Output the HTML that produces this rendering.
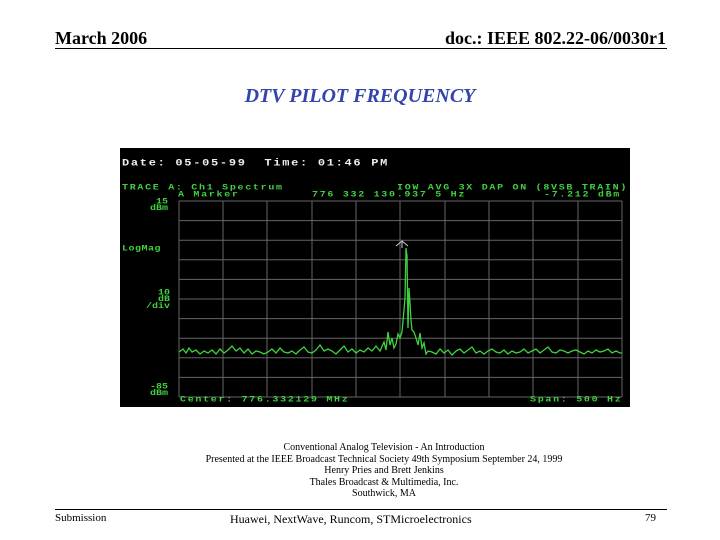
<html><head><style>
body{margin:0;width:720px;height:540px;background:#fff;position:relative;font-family:"Liberation Serif",serif;overflow:hidden}
.a{position:absolute;white-space:nowrap}
.m{font-family:"Liberation Mono",monospace;font-size:10px;line-height:8px;font-weight:bold;position:absolute;white-space:nowrap;letter-spacing:1.7px;transform:scaleY(0.85);transform-origin:0 0}
</style></head><body>
<div class="a" style="left:55px;top:28px;font-size:18px;font-weight:bold">March 2006</div>
<div class="a" style="right:54px;top:28px;font-size:18px;font-weight:bold">doc.: IEEE 802.22-06/0030r1</div>
<div class="a" style="left:55px;top:48px;width:612px;border-top:1px solid #000"></div>
<div class="a" style="left:0;width:720px;text-align:center;top:85px;font-size:20px;font-style:italic;font-weight:bold;color:#3344aa">DTV PILOT FREQUENCY</div>
<div class="a" style="left:120px;top:148px;width:510px;height:259px;background:#000">
<svg width="510" height="259" style="position:absolute;left:0;top:0">
<g stroke="#666" stroke-width="1">
<line x1="59" y1="53" x2="502" y2="53"/><line x1="59" y1="72.6" x2="502" y2="72.6"/><line x1="59" y1="92.2" x2="502" y2="92.2"/><line x1="59" y1="111.8" x2="502" y2="111.8"/><line x1="59" y1="131.4" x2="502" y2="131.4"/><line x1="59" y1="151" x2="502" y2="151"/><line x1="59" y1="170.6" x2="502" y2="170.6"/><line x1="59" y1="190.2" x2="502" y2="190.2"/><line x1="59" y1="209.8" x2="502" y2="209.8"/><line x1="59" y1="229.4" x2="502" y2="229.4"/><line x1="59" y1="249" x2="502" y2="249"/>
<line x1="59" y1="53" x2="59" y2="249"/><line x1="103" y1="53" x2="103" y2="249"/><line x1="147" y1="53" x2="147" y2="249"/><line x1="192" y1="53" x2="192" y2="249"/><line x1="236" y1="53" x2="236" y2="249"/><line x1="280" y1="53" x2="280" y2="249"/><line x1="325" y1="53" x2="325" y2="249"/><line x1="369" y1="53" x2="369" y2="249"/><line x1="413" y1="53" x2="413" y2="249"/><line x1="458" y1="53" x2="458" y2="249"/><line x1="502" y1="53" x2="502" y2="249"/>
</g>
<polyline fill="none" stroke="#3fd23f" stroke-width="1.3" points="59,204 63,201 66,205 69,200 72,204 76,202 80,206 84,203 88,205 92,202 96,206 100,201 104,205 108,202 112,198 116,203 120,200 124,205 128,201 132,206 136,203 140,204 144,206 148,204 152,201 156,205 160,200 164,204 168,205 172,203 176,206 180,202 184,199 188,204 192,205 196,202 200,197 204,203 208,201 212,203 216,206 220,202 224,198 228,204 232,201 236,205 240,202 244,204 248,200 252,203 256,198 260,203 264,194 266,202 268,184 270,197 272,190 274,200 276,196 278,186 280,190 282,184 284,162 285,150 286,100 287,108 288,180 289,140 290,155 291,172 292,182 294,184 296,190 298,197 300,185 302,200 304,195 306,206 308,203 312,204 316,206 320,201 324,205 328,202 332,207 336,203 340,201 344,205 348,202 352,199 356,205 360,203 364,206 368,203 372,201 376,204 380,205 384,202 388,206 392,203 396,205 400,204 404,201 408,205 412,203 416,201 420,205 424,202 428,199 432,204 436,205 440,202 444,203 448,205 452,203 456,202 460,204 464,206 468,203 472,205 476,202 480,204 484,203 488,201 492,205 496,203 500,205 502,205"/>
<path d="M276,98 L282,93 L288,98 M282,93 L282,100" stroke="#ccc" fill="none"/>
</svg>
<div class="m" style="left:2px;top:10px;color:#eee;font-size:12px;line-height:12px;letter-spacing:1.7px">Date: 05-05-99 &nbsp;Time: 01:46 PM</div>
<div class="m" style="left:2px;top:37px;color:#3fd23f">TRACE A: Ch1 Spectrum</div>
<div class="m" style="left:277px;top:37px;color:#3fd23f">IOW AVG 3X DAP ON (8VSB TRAIN)</div>
<div class="m" style="left:58px;top:44px;color:#3fd23f">A Marker</div>
<div class="m" style="left:192px;top:44px;color:#3fd23f">776 332 130.937 5 Hz</div>
<div class="m" style="left:424px;top:44px;color:#3fd23f">-7.212 dBm</div>
<div class="m" style="left:30px;top:51px;color:#3fd23f;text-align:right;letter-spacing:0">15<br>dBm</div>
<div class="m" style="left:2px;top:98px;color:#3fd23f;letter-spacing:0.5px">LogMag</div>
<div class="m" style="left:26px;top:142px;color:#3fd23f;text-align:right;letter-spacing:0">10<br>dB<br>/div</div>
<div class="m" style="left:30px;top:236px;color:#3fd23f;text-align:right;letter-spacing:0">-85<br>dBm</div>
<div class="m" style="left:60px;top:249px;color:#3fd23f">Center: 776.332129 MHz</div>
<div class="m" style="left:410px;top:249px;color:#3fd23f">Span: 500 Hz</div>
</div>
<div class="a" style="left:0;width:768px;text-align:center;top:442px;font-size:10px;line-height:11.5px">Conventional Analog Television - An Introduction<br>Presented at the IEEE Broadcast Technical Society 49th Symposium September 24, 1999<br>Henry Pries and Brett Jenkins<br>Thales Broadcast &amp; Multimedia, Inc.<br>Southwick, MA</div>
<div class="a" style="left:55px;top:509px;width:612px;border-top:1px solid #000"></div>
<div class="a" style="left:55px;top:512px;font-size:11px">Submission</div>
<div class="a" style="left:230px;top:512px;font-size:12px">Huawei, NextWave, Runcom, STMicroelectronics</div>
<div class="a" style="left:645px;top:512px;font-size:11px">79</div>
</body></html>
